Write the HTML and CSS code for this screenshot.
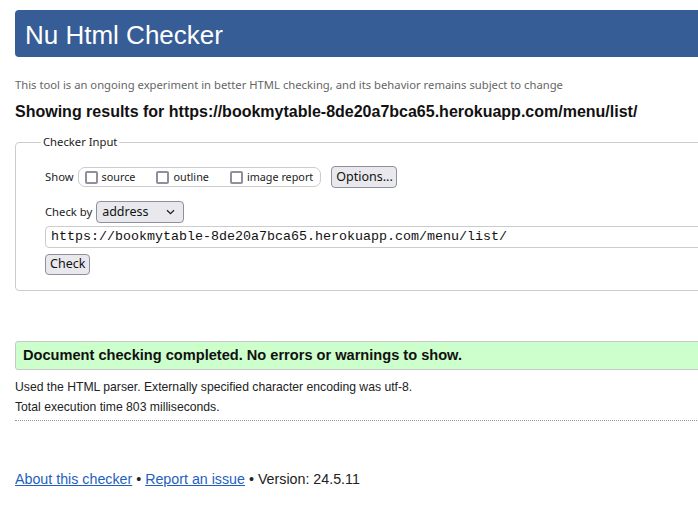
FILE: index.html
```html
<!DOCTYPE html>
<html lang="en">
<head>
<meta charset="utf-8">
<title>Nu Html Checker</title>
<link rel="stylesheet" href="styles.css">
</head>
<body>
<div class="page">
  <h1 class="title">Nu Html Checker</h1>
  <p class="intro">This tool is an ongoing experiment in better HTML checking, and its behavior remains subject to change</p>
  <h2 class="results-for">Showing results for https://bookmytable-8de20a7bca65.herokuapp.com/menu/list/</h2>
  <form class="checker">
    <fieldset class="checker-input">
      <legend>Checker Input</legend>
      <div class="row show-row">
        <span class="lbl">Show</span>
        <span class="opts">
          <label class="opt"><input type="checkbox" class="box">source</label>
          <label class="opt"><input type="checkbox" class="box">outline</label>
          <label class="opt"><input type="checkbox" class="box">image report</label>
        </span>
        <button type="button" class="btn options">Options...</button>
      </div>
      <div class="row checkby-row">
        <span class="lbl">Check by</span>
        <span class="select">address<svg class="chev" width="9" height="6" viewBox="0 0 9 6"><path d="M1 1.2l3.5 3.5 3.5-3.5" fill="none" stroke="#222" stroke-width="1.3"/></svg></span>
      </div>
      <div class="url">https://bookmytable-8de20a7bca65.herokuapp.com/menu/list/</div>
      <div class="row submit-row"><button type="button" class="btn check">Check</button></div>
    </fieldset>
  </form>
  <div class="success">Document checking completed. No errors or warnings to show.</div>
  <p class="details first">Used the HTML parser. Externally specified character encoding was utf-8.</p>
  <p class="details">Total execution time 803 milliseconds.</p>
  <div class="sep"></div>
  <p class="footer"><a href="#">About this checker</a> • <a href="#">Report an issue</a> • Version: 24.5.11</p>
</div>
</body>
</html>
```
FILE: styles.css
```css
html { overflow: hidden; }
body {
  margin: 0;
  background: #fff;
  color: #222;
  font-family: "Liberation Sans", Arial, sans-serif;
}
.page {
  width: 790px;
  padding: 10px 0 0 15px;
}
.title {
  margin: 0;
  height: 47px;
  box-sizing: border-box;
  padding: 3px 0 0 10px;
  line-height: 44px;
  background: #365d95;
  color: #fff;
  font-size: 26px;
  font-weight: normal;
  border-radius: 4px;
}
.intro {
  margin: 20px 0 0;
  font: 11.25px/16px "Noto Sans", sans-serif;
  color: #666;
}
.results-for {
  margin: 9px 0 0;
  font: bold 16px/20px "Liberation Sans", Arial, sans-serif;
  color: #111;
}
.checker { margin: 12px 0 0; }
.checker-input {
  margin: 0;
  border: 1px solid #ccc;
  border-radius: 4px;
  padding: 16px 0 15px 29px;
  font: 11.25px/16px "Noto Sans", sans-serif;
  color: #222;
}
.checker-input legend {
  padding: 0 2px;
  margin-left: -4px;
  font: 11.25px/16px "Noto Sans", sans-serif;
  color: #222;
}
.row {
  display: flex;
  align-items: center;
}
.show-row { height: 22px; }
.lbl { white-space: nowrap; }
.opts {
  display: flex;
  align-items: center;
  margin-left: 4px;
  height: 18px;
  padding: 0 7px 0 6px;
  border: 1px solid #ccc;
  border-radius: 7px;
  gap: 21px;
  font-size: 10.8px;
}
.opt {
  display: flex;
  align-items: center;
  gap: 4px;
}
.box {
  appearance: none;
  margin: 0;
  width: 13px;
  height: 13px;
  border: 2px solid #8f8f9d;
  border-radius: 2px;
  background: #fff;
}
.btn {
  margin: 0;
  font: 12.5px/1 "Noto Sans", sans-serif;
  color: #111;
  background: #e9e9ed;
  border: 1px solid #8f8f9d;
  border-radius: 4px;
  padding: 0 4px;
}
.options {
  margin-left: 10px;
  height: 22px;
  width: 66px;
}
.checkby-row {
  margin-top: 13px;
  height: 22px;
}
.select {
  margin-left: 4px;
  width: 88px;
  height: 22px;
  box-sizing: border-box;
  display: flex;
  align-items: center;
  justify-content: space-between;
  padding: 0 8px 0 5px;
  background: #e9e9ed;
  border: 1px solid #8f8f9d;
  border-radius: 4px;
  font: 12.5px/1 "Noto Sans", sans-serif;
  color: #111;
}
.url {
  margin-top: 3px;
  height: 22px;
  box-sizing: border-box;
  padding-left: 5px;
  border: 1px solid #ccc;
  border-radius: 4px;
  font: 13.33px/20px "Liberation Mono", "DejaVu Sans Mono", monospace;
  color: #111;
}
.submit-row { margin-top: 6px; }
.check {
  height: 21px;
  width: 45px;
}
.success {
  margin-top: 50px;
  height: 29px;
  box-sizing: border-box;
  padding-left: 7px;
  line-height: 27px;
  background: #ccffcc;
  border: 1px solid #c8c8c8;
  border-radius: 3px;
  font-weight: bold;
  font-size: 14.6px;
  color: #111;
}
.details {
  margin: 0;
  font-size: 12.2px;
  line-height: 20px;
  color: #222;
}
.details.first { margin-top: 7px; }
.sep {
  margin-top: 3px;
  border-top: 1px dotted #999;
}
.footer {
  margin: 49px 0 0;
  font-size: 14.25px;
  line-height: 18px;
  color: #222;
}
.footer a { color: #1f5fbf; }
```
